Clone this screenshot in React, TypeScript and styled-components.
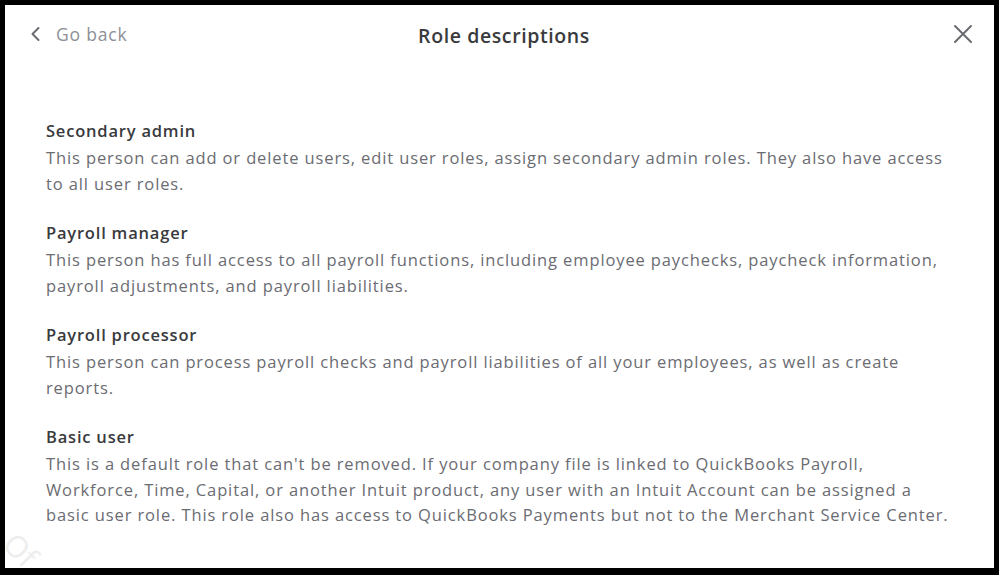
import React from 'react';
import styled, { createGlobalStyle } from 'styled-components';

const GlobalStyle = createGlobalStyle`
  html, body {
    margin: 0;
    padding: 0;
    background: #000;
  }
  body {
    font-family: 'Open Sans', 'Noto Sans', sans-serif;
  }
`;

const roles = [
  {
    name: 'Secondary admin',
    text: 'This person can add or delete users, edit user roles, assign secondary admin roles. They also have access to all user roles.',
  },
  {
    name: 'Payroll manager',
    text: 'This person has full access to all payroll functions, including employee paychecks, paycheck information, payroll adjustments, and payroll liabilities.',
  },
  {
    name: 'Payroll processor',
    text: 'This person can process payroll checks and payroll liabilities of all your employees, as well as create reports.',
  },
  {
    name: 'Basic user',
    text: "This is a default role that can't be removed. If your company file is linked to QuickBooks Payroll, Workforce, Time, Capital, or another Intuit product, any user with an Intuit Account can be assigned a basic user role. This role also has access to QuickBooks Payments but not to the Merchant Service Center.",
  },
];

const App: React.FC = () => {
  return (
    <>
      <GlobalStyle />
      <Frame>
        <Panel>
          <Header>
            <BackButton>
              <svg viewBox='0 0 16 16' width='16' height='16'>
                <path d='M10.5 2 L4.5 8 L10.5 14' fill='none' stroke='#6b6c72' strokeWidth='2' strokeLinecap='round' strokeLinejoin='round' />
              </svg>
              Go back
            </BackButton>
            <Title>Role descriptions</Title>
            <CloseButton aria-label='Close'>
              <svg viewBox='0 0 20 20' width='20' height='20'>
                <path d='M2 2 L18 18 M18 2 L2 18' fill='none' stroke='#6b6c72' strokeWidth='2' strokeLinecap='round' />
              </svg>
            </CloseButton>
          </Header>
          <RoleList>
            {roles.map((role) => (
              <Role key={role.name}>
                <RoleName>{role.name}</RoleName>
                <RoleText>{role.text}</RoleText>
              </Role>
            ))}
          </RoleList>
          <Watermark>Of.c</Watermark>
        </Panel>
      </Frame>
    </>
  );
};

export default App;

const Frame = styled.div`
  width: 999px;
  height: 575px;
  box-sizing: border-box;
  padding: 5px 5px 7px 5px;
  background: #000;
`;

const Panel = styled.div`
  position: relative;
  height: 100%;
  background: #fff;
  overflow: hidden;
`;

const Header = styled.div`
  height: 58px;
  display: flex;
  align-items: center;
  justify-content: space-between;
  padding: 0 21px 0 23px;
  position: relative;
`;

const BackButton = styled.button`
  display: flex;
  align-items: center;
  gap: 12px;
  background: none;
  border: none;
  padding: 0;
  font-family: inherit;
  font-size: 17.5px;
  letter-spacing: 0.8px;
  color: #8d9096;
  cursor: pointer;
  margin-top: -1px;
`;

const Title = styled.h1`
  position: absolute;
  left: 0;
  right: 0;
  padding-left: 9px;
  text-align: center;
  margin: 2px 0 0;
  font-size: 19.5px;
  font-weight: 600;
  letter-spacing: 0.6px;
  color: #393a3d;
  pointer-events: none;
`;

const CloseButton = styled.button`
  background: none;
  border: none;
  padding: 0;
  display: flex;
  cursor: pointer;
  margin-top: -1px;
`;

const RoleList = styled.div`
  margin: 55px 0 0 41px;
  width: 910px;
  display: flex;
  flex-direction: column;
  gap: 24px;
`;

const Role = styled.div`
  display: flex;
  flex-direction: column;
`;

const RoleName = styled.h2`
  margin: 0 0 2px;
  font-size: 16.5px;
  font-weight: 600;
  letter-spacing: 0.8px;
  line-height: 25px;
  color: #393a3d;
`;

const RoleText = styled.p`
  margin: 0;
  font-size: 16.5px;
  letter-spacing: 0.88px;
  line-height: 25.5px;
  color: #6b6c72;
`;

const Watermark = styled.div`
  position: absolute;
  left: -4px;
  bottom: -10px;
  transform: rotate(45deg);
  font-size: 30px;
  color: #ededed;
  pointer-events: none;
`;
